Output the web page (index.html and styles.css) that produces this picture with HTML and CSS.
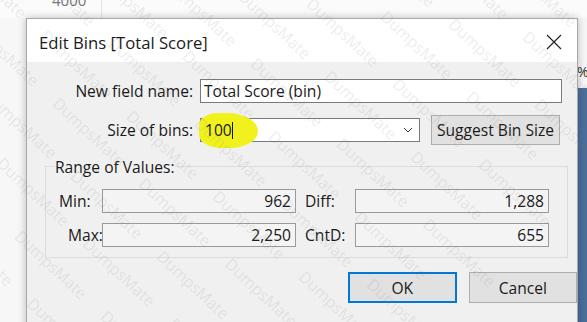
FILE: index.html
```html
<!DOCTYPE html>
<html lang="en">

<head>
  <meta charset="UTF-8" />
  <meta name="viewport" content="width=device-width, initial-scale=1.0" />
  <title>Edit Bins [Total Score]</title>
  <link rel="stylesheet" href="styles.css">
</head>

<body>
  <div class="desktop">
    <div class="chart-top">
      <span class="axis-label">4000</span>
    </div>
    <span class="pct">%</span>
    <div class="bar"></div>

    <div class="dialog">
      <div class="titlebar">
        <span class="title">Edit Bins [Total Score]</span>
        <svg class="close" width="16" height="16" viewBox="0 0 16 16">
          <path d="M1 1 L15 15 M15 1 L1 15" stroke="#222" stroke-width="1.2" fill="none" />
        </svg>
      </div>

      <div class="body">
        <div class="top-form">
          <label class="label" for="field-name">New field name:</label>
          <input class="text-input name-input" id="field-name" type="text" value="Total Score (bin)" />

          <label class="label" for="bin-size">Size of bins:</label>
          <div class="bins-row">
            <div class="combo">
              <span class="marker"></span>
              <span class="combo-value">100<span class="caret"></span></span>
              <svg class="chevron" width="10" height="6" viewBox="0 0 10 6">
                <path d="M1 1 L5 5 L9 1" stroke="#444" stroke-width="1" fill="none" />
              </svg>
            </div>
            <button class="btn suggest">Suggest Bin Size</button>
          </div>
        </div>

        <fieldset class="range">
          <legend class="range-title">Range of Values:</legend>
          <div class="range-grid">
            <span class="small-label">Min:</span>
            <span class="value-box">962</span>
            <span class="small-label">Diff:</span>
            <span class="value-box">1,288</span>

            <span class="small-label">Max:</span>
            <span class="value-box">2,250</span>
            <span class="small-label">CntD:</span>
            <span class="value-box">655</span>
          </div>
        </fieldset>

        <div class="actions">
          <button class="btn ok">OK</button>
          <button class="btn cancel">Cancel</button>
        </div>
      </div>
    </div>

    <div class="watermark">
      <p>DumpsMate DumpsMate DumpsMate DumpsMate DumpsMate DumpsMate DumpsMate</p>
      <p>DumpsMate DumpsMate DumpsMate DumpsMate DumpsMate DumpsMate DumpsMate</p>
      <p>DumpsMate DumpsMate DumpsMate DumpsMate DumpsMate DumpsMate DumpsMate</p>
      <p>DumpsMate DumpsMate DumpsMate DumpsMate DumpsMate DumpsMate DumpsMate</p>
      <p>DumpsMate DumpsMate DumpsMate DumpsMate DumpsMate DumpsMate DumpsMate</p>
      <p>DumpsMate DumpsMate DumpsMate DumpsMate DumpsMate DumpsMate DumpsMate</p>
      <p>DumpsMate DumpsMate DumpsMate DumpsMate DumpsMate DumpsMate DumpsMate</p>
      <p>DumpsMate DumpsMate DumpsMate DumpsMate DumpsMate DumpsMate DumpsMate</p>
      <p>DumpsMate DumpsMate DumpsMate DumpsMate DumpsMate DumpsMate DumpsMate</p>
      <p>DumpsMate DumpsMate DumpsMate DumpsMate DumpsMate DumpsMate DumpsMate</p>
      <p>DumpsMate DumpsMate DumpsMate DumpsMate DumpsMate DumpsMate DumpsMate</p>
      <p>DumpsMate DumpsMate DumpsMate DumpsMate DumpsMate DumpsMate DumpsMate</p>
      <p>DumpsMate DumpsMate DumpsMate DumpsMate DumpsMate DumpsMate DumpsMate</p>
      <p>DumpsMate DumpsMate DumpsMate DumpsMate DumpsMate DumpsMate DumpsMate</p>
      <p>DumpsMate DumpsMate DumpsMate DumpsMate DumpsMate DumpsMate DumpsMate</p>
      <p>DumpsMate DumpsMate DumpsMate DumpsMate DumpsMate DumpsMate DumpsMate</p>
      <p>DumpsMate DumpsMate DumpsMate DumpsMate DumpsMate DumpsMate DumpsMate</p>
      <p>DumpsMate DumpsMate DumpsMate DumpsMate DumpsMate DumpsMate DumpsMate</p>
      <p>DumpsMate DumpsMate DumpsMate DumpsMate DumpsMate DumpsMate DumpsMate</p>
      <p>DumpsMate DumpsMate DumpsMate DumpsMate DumpsMate DumpsMate DumpsMate</p>
      <p>DumpsMate DumpsMate DumpsMate DumpsMate DumpsMate DumpsMate DumpsMate</p>
      <p>DumpsMate DumpsMate DumpsMate DumpsMate DumpsMate DumpsMate DumpsMate</p>
    </div>
  </div>
</body>

</html>
```

FILE: styles.css
```css
body {
  margin: 0;
  padding: 0;
  font-family: 'Open Sans', 'Noto Sans', sans-serif;
  color: #1a1a1a;
  background-color: #f8f8f8;
}

.desktop {
  position: relative;
  width: 587px;
  height: 322px;
  overflow: hidden;
  background-color: #f7f7f7;
}

.chart-top {
  height: 18px;
  background: linear-gradient(90deg, transparent 101px, #e6e6e6 101px, #e6e6e6 102px, transparent 102px),
    #fbfbfb;
  position: relative;
}

.axis-label {
  position: absolute;
  left: 52px;
  top: -10px;
  font-size: 15px;
  color: #777;
}

.pct {
  position: absolute;
  left: 577px;
  top: 62px;
  font-size: 14px;
  color: #333;
}

.bar {
  position: absolute;
  left: 578px;
  top: 88px;
  width: 9px;
  height: 240px;
  background-color: #4b6e9c;
}

/* the dialog window */
.dialog {
  position: absolute;
  left: 26px;
  top: 18px;
  width: 552px;
  height: 320px;
  box-sizing: border-box;
  border: 1px solid #a8a8a8;
  background-color: #f0f0f0;
  box-shadow: 0 0 8px rgba(0, 0, 0, 0.25);
}

.titlebar {
  height: 43px;
  background-color: #fff;
  display: flex;
  align-items: center;
  justify-content: space-between;
  padding: 0 15px 0 12px;
}

.title {
  font-size: 16.7px;
  margin-top: 3px;
}

.close {
  margin-top: 2px;
}

.body {
  padding: 17px 0 0 18px;
}

.top-form {
  display: grid;
  grid-template-columns: 148px 1fr;
  column-gap: 7px;
  row-gap: 12px;
  align-items: center;
}

.label {
  text-align: right;
  font-size: 15.6px;
}

.text-input {
  font-family: inherit;
  font-size: 15.6px;
  height: 24px;
  box-sizing: border-box;
  border: 1px solid #7a7a7a;
  background: #fff;
  padding: 0 3px;
  color: #1a1a1a;
  outline: none;
}

.name-input {
  width: 362px;
}

.bins-row {
  display: flex;
  align-items: center;
  gap: 11px;
}

.combo {
  position: relative;
  width: 220px;
  height: 24px;
  box-sizing: border-box;
  border: 1px solid #7a7a7a;
  background: #fff;
  display: flex;
  align-items: center;
  justify-content: space-between;
  padding: 0 6px 0 4px;
  font-size: 15.6px;
}

.marker {
  position: absolute;
  left: -2px;
  top: -6px;
  width: 59px;
  height: 35px;
  background-color: #f1f21d;
  border-radius: 35% 55% 50% 40%;
}

.combo-value {
  position: relative;
  display: flex;
  align-items: center;
}

.caret {
  display: inline-block;
  width: 1px;
  height: 17px;
  background-color: #111;
}

.chevron {
  position: relative;
}

.btn {
  font-family: inherit;
  font-size: 15.6px;
  color: #1a1a1a;
  background-color: #e1e1e1;
  border: 1px solid #adadad;
  box-sizing: border-box;
  padding: 0;
}

.suggest {
  width: 129px;
  height: 30px;
}

/* range group */
.range {
  margin: 21px 0 0 0;
  width: 523px;
  height: 92px;
  box-sizing: border-box;
  border: 1px solid #dcdcdc;
  padding: 0 0 0 13px;
  position: relative;
}

.range-title {
  font-size: 15.6px;
  padding: 0;
  margin-left: -4px;
  position: absolute;
  top: -11px;
  left: 13px;
  background-color: #f0f0f0;
}

.range-grid {
  display: grid;
  grid-template-columns: 43px 194px 59px 194px;
  row-gap: 10px;
  align-items: center;
  margin-top: 22px;
}

.range-grid .value-box + .small-label {
  margin-left: 9px;
}

.small-label {
  font-size: 15.6px;
}

.value-box {
  height: 24px;
  box-sizing: border-box;
  border: 1px solid #9a9a9a;
  background-color: #f4f4f4;
  text-align: right;
  padding: 0 4px;
  font-size: 15.6px;
  line-height: 22px;
}

.actions {
  display: flex;
  gap: 12px;
  margin: 14px 0 0 303px;
}

.ok,
.cancel {
  width: 110px;
  height: 31px;
}

.ok {
  border: 2px solid #0078d7;
}

/* watermark over everything */
.watermark {
  position: absolute;
  left: -300px;
  top: -300px;
  width: 1200px;
  height: 1000px;
  transform: rotate(43deg);
  pointer-events: none;
  font-family: 'Open Sans', sans-serif;
  font-size: 16px;
  color: rgba(120, 120, 120, 0.15);
  white-space: nowrap;
  word-spacing: 22px;
}

.watermark p {
  margin: 0;
  line-height: 41px;
}

.watermark p:nth-child(even) {
  margin-left: -55px;
}
```
